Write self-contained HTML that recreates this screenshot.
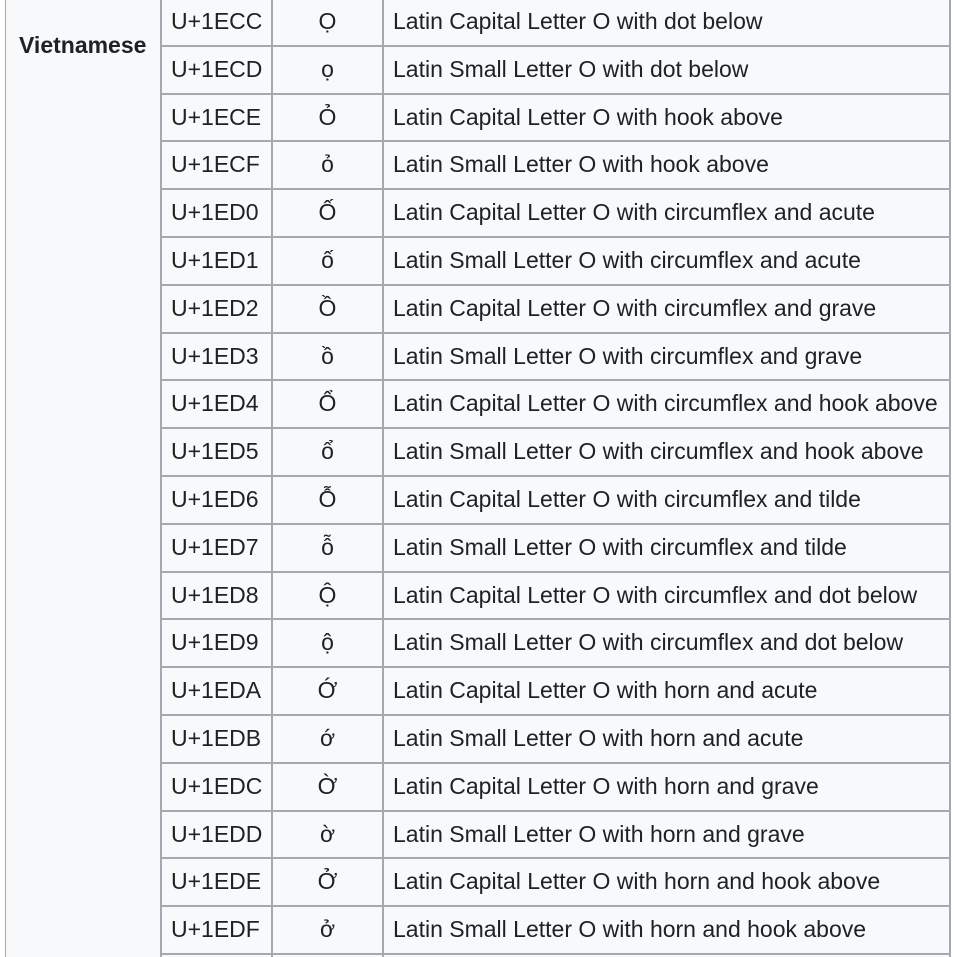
<!DOCTYPE html>
<html><head><meta charset="utf-8"><style>
html,body{margin:0;padding:0;width:954px;height:957px;overflow:hidden;background:#fff;}
body{position:relative;font-family:"Liberation Sans","DejaVu Sans",sans-serif;color:#202122;font-size:23px;}
.bg{position:absolute;left:5px;top:0;width:946px;height:957px;background:#f8f9fa;}
.v{position:absolute;top:0;height:957px;width:2px;background:#a2a9b1;}
.h{position:absolute;left:160px;width:791px;height:2px;background:#a2a9b1;}
.r{position:absolute;left:0;width:954px;height:48px;line-height:48px;white-space:nowrap;}
.r span{position:absolute;top:0;}
.c1{left:171px}.c2{left:272px;width:111px;text-align:center}.c3{left:393px}
.hd{position:absolute;left:19px;top:21px;line-height:48px;font-weight:bold;}
</style></head><body>
<div class="bg"></div>
<div class="v" style="left:5px;width:1px"></div>
<div class="v" style="left:160px"></div>
<div class="v" style="left:271px"></div>
<div class="v" style="left:382px"></div>
<div class="v" style="left:949px"></div>
<div class="hd">Vietnamese</div>
<div class="h" style="top:45px"></div>
<div class="h" style="top:93px"></div>
<div class="h" style="top:140px"></div>
<div class="h" style="top:188px"></div>
<div class="h" style="top:236px"></div>
<div class="h" style="top:284px"></div>
<div class="h" style="top:332px"></div>
<div class="h" style="top:379px"></div>
<div class="h" style="top:427px"></div>
<div class="h" style="top:475px"></div>
<div class="h" style="top:523px"></div>
<div class="h" style="top:571px"></div>
<div class="h" style="top:618px"></div>
<div class="h" style="top:666px"></div>
<div class="h" style="top:714px"></div>
<div class="h" style="top:762px"></div>
<div class="h" style="top:810px"></div>
<div class="h" style="top:857px"></div>
<div class="h" style="top:905px"></div>
<div class="h" style="top:953px"></div>
<div class="r" style="top:-3px"><span class="c1">U+1ECC</span><span class="c2">Ọ</span><span class="c3">Latin Capital Letter O with dot below</span></div>
<div class="r" style="top:45px"><span class="c1">U+1ECD</span><span class="c2">ọ</span><span class="c3">Latin Small Letter O with dot below</span></div>
<div class="r" style="top:93px"><span class="c1">U+1ECE</span><span class="c2">Ỏ</span><span class="c3">Latin Capital Letter O with hook above</span></div>
<div class="r" style="top:140px"><span class="c1">U+1ECF</span><span class="c2">ỏ</span><span class="c3">Latin Small Letter O with hook above</span></div>
<div class="r" style="top:188px"><span class="c1">U+1ED0</span><span class="c2">Ố</span><span class="c3">Latin Capital Letter O with circumflex and acute</span></div>
<div class="r" style="top:236px"><span class="c1">U+1ED1</span><span class="c2">ố</span><span class="c3">Latin Small Letter O with circumflex and acute</span></div>
<div class="r" style="top:284px"><span class="c1">U+1ED2</span><span class="c2">Ồ</span><span class="c3">Latin Capital Letter O with circumflex and grave</span></div>
<div class="r" style="top:332px"><span class="c1">U+1ED3</span><span class="c2">ồ</span><span class="c3">Latin Small Letter O with circumflex and grave</span></div>
<div class="r" style="top:379px"><span class="c1">U+1ED4</span><span class="c2">Ổ</span><span class="c3">Latin Capital Letter O with circumflex and hook above</span></div>
<div class="r" style="top:427px"><span class="c1">U+1ED5</span><span class="c2">ổ</span><span class="c3">Latin Small Letter O with circumflex and hook above</span></div>
<div class="r" style="top:475px"><span class="c1">U+1ED6</span><span class="c2">Ỗ</span><span class="c3">Latin Capital Letter O with circumflex and tilde</span></div>
<div class="r" style="top:523px"><span class="c1">U+1ED7</span><span class="c2">ỗ</span><span class="c3">Latin Small Letter O with circumflex and tilde</span></div>
<div class="r" style="top:571px"><span class="c1">U+1ED8</span><span class="c2">Ộ</span><span class="c3">Latin Capital Letter O with circumflex and dot below</span></div>
<div class="r" style="top:618px"><span class="c1">U+1ED9</span><span class="c2">ộ</span><span class="c3">Latin Small Letter O with circumflex and dot below</span></div>
<div class="r" style="top:666px"><span class="c1">U+1EDA</span><span class="c2">Ớ</span><span class="c3">Latin Capital Letter O with horn and acute</span></div>
<div class="r" style="top:714px"><span class="c1">U+1EDB</span><span class="c2">ớ</span><span class="c3">Latin Small Letter O with horn and acute</span></div>
<div class="r" style="top:762px"><span class="c1">U+1EDC</span><span class="c2">Ờ</span><span class="c3">Latin Capital Letter O with horn and grave</span></div>
<div class="r" style="top:810px"><span class="c1">U+1EDD</span><span class="c2">ờ</span><span class="c3">Latin Small Letter O with horn and grave</span></div>
<div class="r" style="top:857px"><span class="c1">U+1EDE</span><span class="c2">Ở</span><span class="c3">Latin Capital Letter O with horn and hook above</span></div>
<div class="r" style="top:905px"><span class="c1">U+1EDF</span><span class="c2">ở</span><span class="c3">Latin Small Letter O with horn and hook above</span></div>
</body></html>
